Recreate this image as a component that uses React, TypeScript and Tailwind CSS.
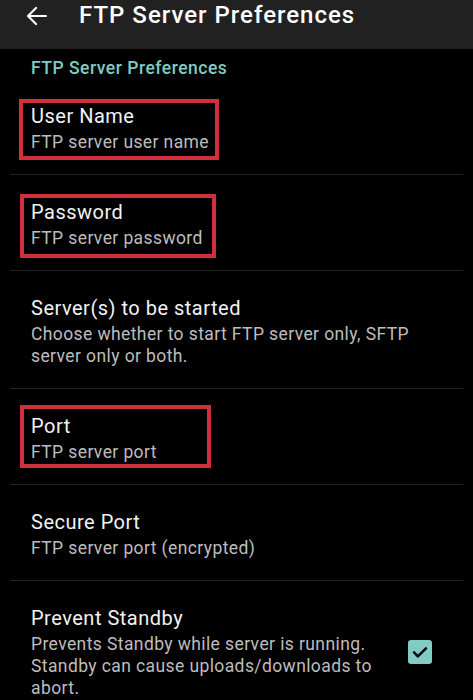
import React from 'react';

const font = { fontFamily: "Roboto, 'Noto Sans', sans-serif" };

type Mark = { left: number; top: number; width: number; height: number };

type Pref = {
  title: string;
  summary: string;
  mark?: Mark;
  checkbox?: boolean;
};

// red annotation boxes drawn over the screenshot, offsets from the text block
const prefs: Pref[] = [
  { title: 'User Name', summary: 'FTP server user name', mark: { left: -12, top: -4, width: 200, height: 61 } },
  { title: 'Password', summary: 'FTP server password', mark: { left: -11, top: -5, width: 196, height: 64 } },
  { title: 'Server(s) to be started', summary: 'Choose whether to start FTP server only, SFTP server only or both.' },
  { title: 'Port', summary: 'FTP server port', mark: { left: -11, top: -8, width: 191, height: 63 } },
  { title: 'Secure Port', summary: 'FTP server port (encrypted)' },
  {
    title: 'Prevent Standby',
    summary: 'Prevents Standby while server is running. Standby can cause uploads/downloads to abort.',
    checkbox: true,
  },
];

function Row({ pref, last }: { pref: Pref; last: boolean }) {
  return (
    <div className={`mx-[10px] ${last ? '' : 'border-b border-[#222222]'}`}>
      <div className="flex items-center pt-[24px] pb-[21px] pl-[21px]">
        <div className={`relative min-w-0 flex-1 ${pref.checkbox ? 'pr-[12px]' : 'pr-[23px]'}`}>
          <div className="text-[20px] leading-[26px] tracking-[0.5px] text-[#f2f2f2]">{pref.title}</div>
          <div className="mt-[2px] text-[17.5px] leading-[22px] tracking-[0.4px] text-[#bdbdbd]">{pref.summary}</div>
          {pref.mark && (
            <div
              className="pointer-events-none absolute border-[4px] border-[#d0303c]"
              style={{ left: pref.mark.left, top: pref.mark.top, width: pref.mark.width, height: pref.mark.height }}
            />
          )}
        </div>
        {pref.checkbox && (
          <div className="mr-[31px] flex h-[24px] w-[24px] shrink-0 items-center justify-center rounded-[3px] bg-[#80cbc4]">
            <svg viewBox="0 0 24 24" className="h-[22px] w-[22px]" fill="none" stroke="#0a0a0a" strokeWidth="2.8" strokeLinecap="round" strokeLinejoin="round">
              <path d="M5.5 12.5l4.2 4.2L18.5 8" />
            </svg>
          </div>
        )}
      </div>
    </div>
  );
}

export default function App() {
  return (
    <div className="h-[700px] w-[473px] overflow-hidden bg-black" style={font}>
      <div className="flex h-[49px] items-start bg-[#212121] pl-[25px] pt-[1px]">
        <svg viewBox="0 0 24 24" className="mt-[3px] h-[24px] w-[24px]" fill="none" stroke="#fff" strokeWidth="2.2" strokeLinecap="round" strokeLinejoin="round">
          <path d="M21 12H3.5M11 4l-8 8 8 8" />
        </svg>
        <h1 className="ml-[30px] text-[24px] font-medium leading-[28px] tracking-[1px] text-white">FTP Server Preferences</h1>
      </div>
      <div className="pl-[31px] pt-[8px] text-[17.5px] font-medium leading-[22px] tracking-[0.5px] text-[#80cbc4]">
        FTP Server Preferences
      </div>
      {prefs.map((p, i) => (
        <Row key={p.title} pref={p} last={i === prefs.length - 1} />
      ))}
    </div>
  );
}
